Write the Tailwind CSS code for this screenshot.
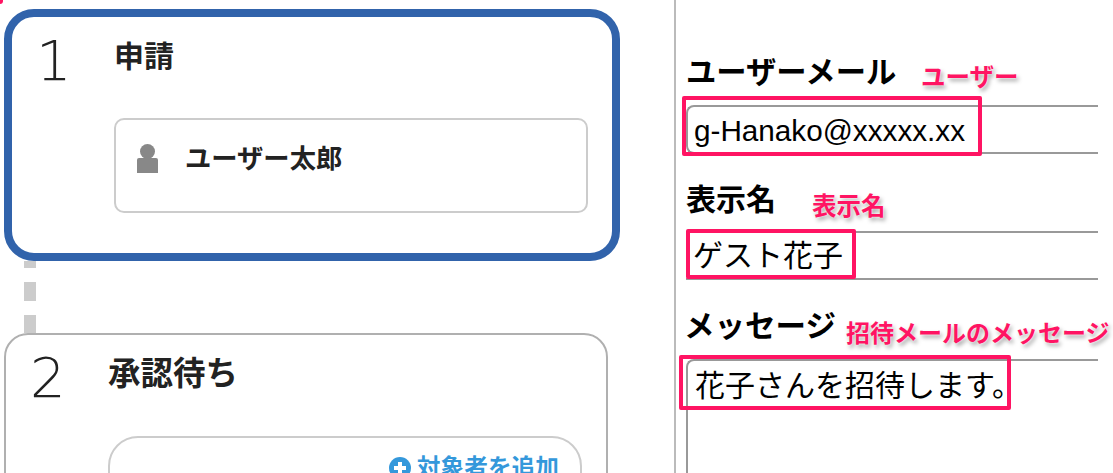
<!DOCTYPE html>
<html lang="ja">
<head>
    <meta charset="utf-8"/>
    <title>ユーザー招待</title>
    <script src="https://cdn.jsdelivr.net/npm/@tailwindcss/browser@4"></script>
</head>
<body class="relative h-[473px] w-[1113px] overflow-hidden bg-white font-['Liberation_Sans','Noto_Sans_CJK_JP',sans-serif] text-[#222]">
    <div class="flex h-full">
        <!-- Flow steps -->
        <div class="w-[674px] shrink-0 pt-[9px] pl-[4px]">
            <section class="flex h-[252px] w-[616px] rounded-[30px] border-[8px] border-[#3163ab] bg-white">
                <div class="w-[102px] pt-[11px] pl-[24px] font-['DejaVu_Sans',sans-serif] text-[56px] leading-[66px] font-extralight">1</div>
                <div class="flex-1 pt-[20px]">
                    <h2 class="text-[30px] leading-[40px] font-bold">申請</h2>
                    <div class="mt-[41px] flex h-[95px] w-[474px] items-center rounded-[10px] border-2 border-[#ccc] pb-[14px] pl-[21px]">
                        <svg class="h-[29px] w-[21px]" viewBox="0 0 21 29" fill="#888">
                            <circle cx="10.5" cy="7.5" r="7.5"/>
                            <path d="M2 14h17a2 2 0 0 1 2 2v13H0V16a2 2 0 0 1 2-2z"/>
                        </svg>
                        <span class="ml-[27px] text-[26.3px] leading-[34px] font-bold">ユーザー太郎</span>
                    </div>
                </div>
            </section>
            <div class="ml-[20px] flex h-[72px] w-[12px] flex-col">
                <div class="h-[7px] bg-[#ccc]"></div>
                <div class="mt-[14px] h-[19px] bg-[#ccc]"></div>
                <div class="mt-[14px] h-[18px] bg-[#ccc]"></div>
            </div>
            <section class="flex h-[200px] w-[604px] rounded-t-[24px] border-2 border-[#b0b0b0] bg-white">
                <div class="w-[102px] pt-[10px] pl-[24px] font-['DejaVu_Sans',sans-serif] text-[56px] leading-[66px] font-extralight">2</div>
                <div class="flex-1 pt-[18px]">
                    <h2 class="text-[32.5px] leading-[42px] font-bold">承認待ち</h2>
                    <div class="mt-[41px] flex h-[80px] w-[474px] justify-end rounded-t-[30px] border-2 border-[#ccc] pt-[14px] pr-[21px]">
                        <div class="flex items-start text-[#3498db]">
                            <svg class="mt-[5px] mr-[6px] h-[22px] w-[22px]" viewBox="0 0 22 22">
                                <circle cx="11" cy="11" r="11" fill="#3498db"/>
                                <path d="M11 5v12M5 11h12" stroke="#fff" stroke-width="4"/>
                            </svg>
                            <span class="text-[23.7px] leading-[32px] font-bold">対象者を追加</span>
                        </div>
                    </div>
                </div>
            </section>
        </div>

        <!-- Invite form -->
        <div class="h-full w-[424px] border-l-2 border-[#bbb] pl-[10px]">
            <label class="block pt-[53px] text-[30.3px] leading-[40px] font-bold text-black">ユーザーメール</label>
            <input class="mt-[12px] block h-[49px] w-[412px] rounded-l-[8px] border-y-2 border-l-2 border-[#999] pt-[2px] pl-[6px] text-[29.7px] text-black outline-none" value="g-Hanako@xxxxx.xx"/>
            <label class="block pt-[28px] text-[30px] leading-[36px] font-bold text-black">表示名</label>
            <input class="mt-[13px] block h-[49px] w-[412px] border-y-2 border-[#999] pb-[6px] pl-[7px] text-[30px] text-black outline-none" value="ゲスト花子"/>
            <label class="-ml-[2px] block pt-[26px] text-[30.5px] leading-[40px] font-bold text-black">メッセージ</label>
            <textarea class="mt-[13px] block h-[120px] w-[412px] resize-none rounded-tl-[8px] border-t-2 border-l-2 border-[#999] pt-[3px] pl-[7px] text-[30px] leading-[44px] text-black outline-none">花子さんを招待します。</textarea>
        </div>
    </div>

    <!-- Annotations -->
    <div class="absolute top-0 left-0 h-[4px] w-[3px] rounded-br-full bg-[#ff1463]"></div>
    <div class="absolute top-[96px] left-[682px] h-[60px] w-[300px] rounded-[2px] border-[4px] border-[#ff1463]"></div>
    <div class="absolute top-[229px] left-[686px] h-[50px] w-[170px] rounded-[2px] border-[4px] border-[#ff1463]"></div>
    <div class="absolute top-[355px] left-[679px] h-[55px] w-[332px] rounded-[2px] border-[4px] border-[#ff1463]"></div>
    <span class="absolute top-[62px] left-[921px] text-[24.5px] leading-[32px] font-bold text-[#ff1463] [text-shadow:0_0_2px_#fff,2px_3px_4px_rgba(0,0,0,0.35)]">ユーザー</span>
    <span class="absolute top-[191px] left-[812px] text-[24.5px] leading-[32px] font-bold text-[#ff1463] [text-shadow:0_0_2px_#fff,2px_3px_4px_rgba(0,0,0,0.35)]">表示名</span>
    <span class="absolute top-[318px] left-[846px] text-[24px] leading-[32px] font-bold whitespace-nowrap text-[#ff1463] [text-shadow:0_0_2px_#fff,2px_3px_4px_rgba(0,0,0,0.35)]">招待メールのメッセージ</span>
</body>
</html>
